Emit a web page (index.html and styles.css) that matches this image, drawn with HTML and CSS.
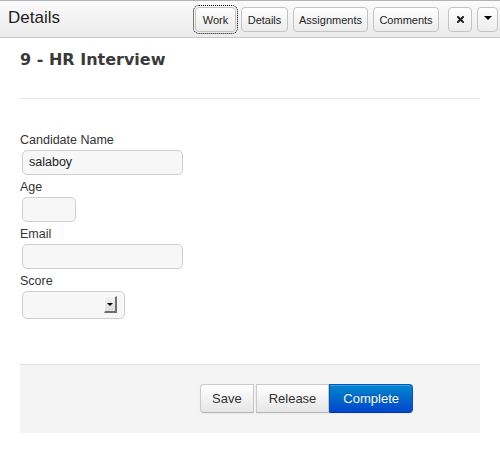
FILE: index.html
```html
<!DOCTYPE html>
<html>
<head>
<meta charset="utf-8">
<link rel="stylesheet" href="styles.css">
</head>
<body>
<div class="header">
  <div class="title">Details</div>
  <div class="tabs">
    <button class="hbtn focused w-work">Work</button>
    <button class="hbtn w-details">Details</button>
    <button class="hbtn w-assign">Assignments</button>
    <button class="hbtn w-comments">Comments</button>
    <button class="hbtn icon close"><svg width="7" height="7" viewBox="0 0 7 7"><path d="M1 1 L6 6 M6 1 L1 6" stroke="#222" stroke-width="2" stroke-linecap="square"/></svg></button>
    <button class="hbtn icon menu"><span class="caret"></span></button>
  </div>
</div>
<div class="content">
  <h2 class="task-title">9 - HR Interview</h2>
  <hr class="sep">
  <form class="form">
    <label class="lbl">Candidate Name</label>
    <div class="field wide">salaboy</div>
    <label class="lbl">Age</label>
    <div class="field short"></div>
    <label class="lbl">Email</label>
    <div class="field wide"></div>
    <label class="lbl">Score</label>
    <div class="select"><span class="arrow"><span class="tri"></span></span></div>
    <div class="actions">
      <button type="button" class="btn first">Save</button>
      <button type="button" class="btn mid">Release</button>
      <button type="button" class="btn primary last">Complete</button>
    </div>
  </form>
</div>
</body>
</html>
```
FILE: styles.css
```css
html, body {
  margin: 0;
  padding: 0;
  background: #fff;
}
body {
  font-family: "Liberation Sans", Arial, sans-serif;
  color: #333;
}
.header {
  height: 36px;
  border-top: 1px solid #b3b3b3;
  border-bottom: 1px solid #c6c6c6;
  background: linear-gradient(#fbfbfb, #ebebeb);
  display: flex;
  align-items: center;
  justify-content: space-between;
  padding: 0 2px 0 8px;
}
.title {
  font-size: 17px;
  color: #222;
  margin-top: -3px;
}
.tabs {
  display: flex;
  align-items: center;
  gap: 5px;
}
.hbtn {
  box-sizing: border-box;
  height: 25px;
  margin-top: 1px;
  padding: 0;
  font-family: "Liberation Sans", Arial, sans-serif;
  font-size: 11px;
  color: #222;
  background: linear-gradient(#ffffff, #ececec);
  border: 1px solid #c4c4c4;
  border-radius: 4px;
  box-shadow: inset 0 1px 0 rgba(255,255,255,.6);
  display: flex;
  align-items: center;
  justify-content: center;
}
.hbtn.focused {
  outline: 1px dotted #000;
  outline-offset: 1px;
}
.w-work { width: 41px; }
.w-details { width: 47px; }
.w-assign { width: 75px; }
.w-comments { width: 66px; }
.hbtn.icon {
  width: 24px;
}
.hbtn.close {
  margin-left: 4px;
}
.hbtn.menu {
  width: 21px;
}
.caret {
  width: 0;
  height: 0;
  border-top: 4px solid #000;
  border-left: 4px solid transparent;
  border-right: 4px solid transparent;
  margin-top: -4px;
}
.content {
  padding: 0 20px;
}
.task-title {
  margin: 12px 0 0;
  font-family: "DejaVu Sans", Verdana, sans-serif;
  font-size: 16px;
  line-height: 20px;
  font-weight: bold;
  color: #3a3a3a;
}
.sep {
  margin: 28px 0 0;
  border: 0;
  border-top: 1px solid #e6e6e6;
  height: 0;
}
.form {
  display: flex;
  flex-direction: column;
  align-items: flex-start;
  padding-top: 32px;
}
.lbl {
  display: block;
  font-size: 12.5px;
  line-height: 18px;
  color: #333;
  margin-bottom: 1px;
}
.field {
  box-sizing: border-box;
  height: 25px;
  margin: 0 0 3px 2px;
  background: #f7f7f7;
  border: 1px solid #cfcfcf;
  border-radius: 5px;
  font-size: 12.5px;
  line-height: 23px;
  padding-left: 6px;
  color: #222;
}
.field.wide { width: 161px; }
.field.short { width: 54px; }
.select {
  box-sizing: border-box;
  width: 103px;
  height: 28px;
  margin-left: 2px;
  background: #f7f7f7;
  border: 1px solid #cfcfcf;
  border-radius: 5px;
  display: flex;
  justify-content: flex-end;
  align-items: flex-start;
  padding: 4px 7px 0 0;
}
.arrow {
  box-sizing: border-box;
  width: 13px;
  height: 17px;
  background: linear-gradient(#f2f2f2, #dcdcdc);
  border-top: 1px solid #fff;
  border-left: 1px solid #fff;
  border-right: 2px solid #6f6f6f;
  border-bottom: 2px solid #6f6f6f;
  display: flex;
  align-items: center;
  justify-content: center;
}
.tri {
  width: 0;
  height: 0;
  border-top: 3px solid #000;
  border-left: 3px solid transparent;
  border-right: 3px solid transparent;
  margin-top: 1px;
}
.actions {
  align-self: stretch;
  margin-top: 45px;
  background: #f4f4f4;
  border-top: 1px solid #e2e2e2;
  padding: 19px 20px 20px 180px;
  display: flex;
}
.btn {
  height: 29px;
  padding: 0 11px;
  font-family: "Liberation Sans", Arial, sans-serif;
  font-size: 13px;
  color: #333;
  background: linear-gradient(#ffffff, #e6e6e6);
  border: 1px solid #c9c9c9;
  border-bottom-color: #b3b3b3;
  border-radius: 0;
  box-shadow: inset 0 1px 0 rgba(255,255,255,.2), 0 1px 2px rgba(0,0,0,.05);
}
.btn.first { border-radius: 4px 0 0 4px; margin-right: 2px; }
.btn.mid { padding: 0 12px; }
.btn.last { border-radius: 0 4px 4px 0; }
.btn.primary {
  color: #fff;
  background: linear-gradient(#0088cc, #0046cc);
  border-color: #0a50c0 #0a50c0 #063a9a;
  text-shadow: 0 -1px 0 rgba(0,0,0,.25);
  padding: 0 13px;
}
```
